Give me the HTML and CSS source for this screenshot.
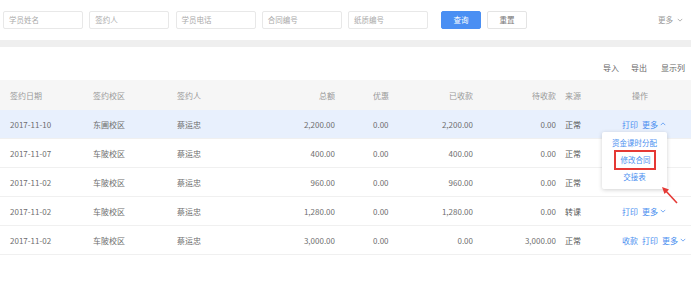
FILE: index.html
```html
<!DOCTYPE html>
<html lang="zh">
<head>
<meta charset="utf-8">
<link rel="stylesheet" href="styles.css">
</head>
<body>
<div class="page">
  <div class="search">
    <div class="inputs">
      <div class="field">学员姓名</div>
      <div class="field">签约人</div>
      <div class="field">学员电话</div>
      <div class="field">合同编号</div>
      <div class="field">纸质编号</div>
    </div>
    <div class="btn primary">查询</div>
    <div class="btn">重置</div>
    <div class="more">更多<svg class="chev" viewBox="0 0 8 5" width="6" height="4"><path d="M1 1 L4 4 L7 1" fill="none" stroke="#999" stroke-width="1"/></svg></div>
  </div>
  <div class="band"></div>
  <div class="toolbar">
    <span>导入</span><span>导出</span><span class="cols">显示列</span>
  </div>
  <div class="table">
    <div class="row head">
      <div class="c c1">签约日期</div>
      <div class="c c2">签约校区</div>
      <div class="c c3">签约人</div>
      <div class="c c4">总额</div>
      <div class="c c5">优惠</div>
      <div class="c c6">已收款</div>
      <div class="c c7">待收款</div>
      <div class="c c8">来源</div>
      <div class="c c9 hop">操作</div>
    </div>
    <div class="row active">
      <div class="c c1">2017-11-10</div>
      <div class="c c2">东圃校区</div>
      <div class="c c3">蔡运忠</div>
      <div class="c c4">2,200.00</div>
      <div class="c c5">0.00</div>
      <div class="c c6">2,200.00</div>
      <div class="c c7">0.00</div>
      <div class="c c8 src">正常</div>
      <div class="c c9 ops">
        <span class="lk">打印</span><span class="lk">更多<svg class="chev" viewBox="0 0 8 5" width="6" height="4"><path d="M1 4 L4 1 L7 4" fill="none" stroke="#4a8ff0" stroke-width="1"/></svg></span>
        <div class="menu">
          <div class="mi">资金课时分配</div>
          <div class="mi boxed">修改合同</div>
          <div class="mi">交接表</div>
        </div>
        <svg class="arrow" width="24" height="24" viewBox="0 0 24 24"><path d="M19 20 L7 7" stroke="#e53935" stroke-width="1.6" fill="none"/><path d="M4 4 L11 6.5 L6.5 11 Z" fill="#e53935"/></svg>
      </div>
    </div>
    <div class="row">
      <div class="c c1">2017-11-07</div>
      <div class="c c2">车陂校区</div>
      <div class="c c3">蔡运忠</div>
      <div class="c c4">400.00</div>
      <div class="c c5">0.00</div>
      <div class="c c6">400.00</div>
      <div class="c c7">0.00</div>
      <div class="c c8 src">正常</div>
      <div class="c c9 ops"></div>
    </div>
    <div class="row">
      <div class="c c1">2017-11-02</div>
      <div class="c c2">车陂校区</div>
      <div class="c c3">蔡运忠</div>
      <div class="c c4">960.00</div>
      <div class="c c5">0.00</div>
      <div class="c c6">960.00</div>
      <div class="c c7">0.00</div>
      <div class="c c8 src">正常</div>
      <div class="c c9 ops"></div>
    </div>
    <div class="row">
      <div class="c c1">2017-11-02</div>
      <div class="c c2">车陂校区</div>
      <div class="c c3">蔡运忠</div>
      <div class="c c4">1,280.00</div>
      <div class="c c5">0.00</div>
      <div class="c c6">1,280.00</div>
      <div class="c c7">0.00</div>
      <div class="c c8 src">转课</div>
      <div class="c c9 ops"><span class="lk">打印</span><span class="lk">更多<svg class="chev" viewBox="0 0 8 5" width="6" height="4"><path d="M1 1 L4 4 L7 1" fill="none" stroke="#4a8ff0" stroke-width="1"/></svg></span></div>
    </div>
    <div class="row">
      <div class="c c1">2017-11-02</div>
      <div class="c c2">车陂校区</div>
      <div class="c c3">蔡运忠</div>
      <div class="c c4">3,000.00</div>
      <div class="c c5">0.00</div>
      <div class="c c6">0.00</div>
      <div class="c c7">3,000.00</div>
      <div class="c c8 src">正常</div>
      <div class="c c9 ops"><span class="lk">收款</span><span class="lk">打印</span><span class="lk">更多<svg class="chev" viewBox="0 0 8 5" width="6" height="4"><path d="M1 1 L4 4 L7 1" fill="none" stroke="#4a8ff0" stroke-width="1"/></svg></span></div>
    </div>
  </div>
</div>
</body>
</html>
```
FILE: styles.css
```css
* { box-sizing: border-box; }
html, body { margin: 0; padding: 0; background: #fff; }
body {
  font-family: "Noto Sans CJK SC", "Noto Sans", sans-serif;
  font-size: 8px;
  color: #6e6e6e;
  width: 691px;
  height: 292px;
  overflow: hidden;
}
.page { width: 691px; }
.search {
  height: 40px;
  display: flex;
  align-items: flex-start;
  padding: 11px 0 0 3px;
}
.inputs { display: flex; gap: 6.25px; }
.field {
  width: 80px;
  height: 18px;
  border: 1px solid #e8e8e8;
  border-radius: 2px;
  padding-left: 5px;
  line-height: 16px;
  color: #aaa;
  font-size: 7.5px;
}
.btn {
  width: 40px;
  height: 18px;
  border: 1px solid #e4e4e4;
  border-radius: 2px;
  text-align: center;
  line-height: 16px;
  color: #777;
  margin-left: 6px;
  font-size: 7.5px;
}
.btn.primary {
  margin-left: 13px;
  background: #4a8ff3;
  border-color: #4a8ff3;
  color: #fff;
}
.more {
  margin-left: auto;
  margin-right: 8px;
  margin-top: 3px;
  color: #999;
  font-size: 7.5px;
  display: flex;
  align-items: center;
  gap: 2px;
}
.chev { display: inline-block; margin-left: 2px; vertical-align: middle; }
.band { height: 7px; background: #efefef; }
.toolbar {
  height: 33px;
  display: flex;
  justify-content: flex-end;
  align-items: center;
  gap: 12px;
  padding: 8px 6px 0 0;
  color: #666;
  font-size: 8px;
}
.toolbar .cols { margin-left: 2px; }
.table { width: 691px; }
.row {
  display: grid;
  grid-template-columns: 83px 84px 83px 95px 75px 63px 77px 52px 79px;
  height: 29px;
  align-items: center;
  border-bottom: 1px solid #f0f0f0;
}
.row.head { height: 30px; background: #f6f6f6; color: #999; border-bottom: none; }
.row.active { background: #e8f0fd; }
.c { padding-left: 10px; white-space: nowrap; }
.c4 { text-align: right; padding: 0 10px 0 0; }
.c5 { padding-left: 28px; }
.c6 { text-align: right; padding: 0 10px 0 0; }
.c7 { text-align: right; padding: 0 4px 0 0; }
.c8 { padding-left: 5px; }
.src { color: #555; }
.hop { padding-left: 20px; }
.ops { position: relative; display: flex; align-items: center; gap: 4px; }
.lk { color: #4a8ff0; display: inline-flex; align-items: center; }
.menu {
  position: absolute;
  left: -10px;
  top: 13px;
  width: 65px;
  height: 57px;
  background: #fff;
  box-shadow: 0 1px 4px rgba(0,0,0,0.18);
  border-radius: 2px;
  display: flex;
  flex-direction: column;
  align-items: center;
  padding-top: 5px;
  z-index: 2;
}
.mi { color: #4a8ff0; font-size: 7.5px; line-height: 12px; }
.mi + .mi { margin-top: 5px; }
.mi.boxed {
  border: 2px solid #e53935;
  padding: 2px 5px;
  line-height: 12px;
  width: 42px;
  text-align: center;
  margin-top: 1px;
}
.mi.boxed + .mi { margin-top: 1px; }
.arrow { position: absolute; left: 46px; top: 64px; z-index: 3; }
```
